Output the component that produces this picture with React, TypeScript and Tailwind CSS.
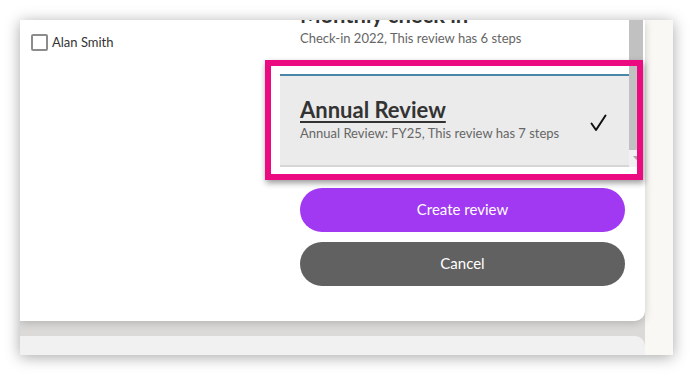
import React from "react";

export default function App() {
  return (
    <div className="w-[694px] h-[377px] bg-white pt-[20px] pl-[20px]" style={{ fontFamily: "Lato, 'Noto Sans', sans-serif" }}>
      <div className="flex w-[653px] h-[335px] overflow-hidden bg-[#f9f8f4] shadow-[0_2px_14px_rgba(0,0,0,0.35)]">
        <div className="flex flex-col w-[625px] bg-[#dbdad8]">
          <div className="relative z-10 flex h-[301px] bg-white rounded-br-[10px] shadow-[0_2px_8px_rgba(0,0,0,0.18)]">
            <div className="w-[260px] pl-[11px] pt-[12px]">
              <label className="flex items-center gap-[4px] text-[13px] text-[#333]">
                <span className="w-[17px] h-[17px] border-2 border-[#8c8c8c] rounded-[2px] bg-white"></span>
                <span className="mt-[1px]">Alan Smith</span>
              </label>
            </div>
            <div className="flex flex-col w-[365px]">
              <div className="flex h-[148px] overflow-hidden">
                <div className="w-[349px] flex flex-col mt-[-40px]">
                  <div className="border-t-2 border-transparent pt-[21px] pb-[26px] pl-[20px] bg-white">
                    <div className="text-[22px] leading-[24px] font-bold text-[#333]">Monthly check in</div>
                    <div className="mt-[1px] text-[13px] leading-[20px] text-[#666]">Check-in 2022, This review has 6 steps</div>
                  </div>
                  <div className="border-t-2 border-[#4a87a8] border-b-2 border-b-[#d6d6d6] bg-[#ebebeb] pt-[22px] pb-[22px] pl-[20px] pr-[22px] flex items-center justify-between">
                    <div>
                      <div className="text-[22px] leading-[24px] font-bold text-[#333] underline decoration-2 underline-offset-[3px]">Annual Review</div>
                      <div className="mt-[1px] text-[13px] leading-[20px] text-[#666]">Annual Review: FY25, This review has 7 steps</div>
                    </div>
                    <svg width="17" height="18" viewBox="0 0 17 18" className="mt-[4px]">
                      <path d="M1.5 9.5 L6 16 L15.5 1.5" fill="none" stroke="#111" strokeWidth="2" strokeLinecap="round" strokeLinejoin="round" />
                    </svg>
                  </div>
                </div>
                <div className="w-[14px] flex flex-col">
                  <div className="h-[130px] bg-[#c1c1c1]"></div>
                  <div className="h-[17px] bg-[#f1f1f1] flex items-center justify-center">
                    <svg width="7" height="5" viewBox="0 0 7 5"><path d="M0 0 L7 0 L3.5 4 Z" fill="#a3a3a3" /></svg>
                  </div>
                </div>
              </div>
              <div className="mx-[20px] mt-[20px] flex flex-col gap-[10px]">
                <button className="h-[44px] rounded-full bg-[#a138f2] text-white text-[15px] leading-[20px] pb-[2px]">Create review</button>
                <button className="h-[44px] rounded-full bg-[#616161] text-white text-[15px] leading-[20px] pb-[2px]">Cancel</button>
              </div>
            </div>
            <div className="absolute left-[245px] top-[40px] w-[378px] h-[120px] border-[6px] border-[#ec0a80] shadow-[1px_3px_6px_rgba(0,0,0,0.4)] pointer-events-none"></div>
          </div>
          <div className="h-[15px]"></div>
          <div className="h-[19px] bg-[#f1f1f1] rounded-tr-[10px]"></div>
        </div>
        <div className="w-[28px]"></div>
      </div>
    </div>
  );
}
